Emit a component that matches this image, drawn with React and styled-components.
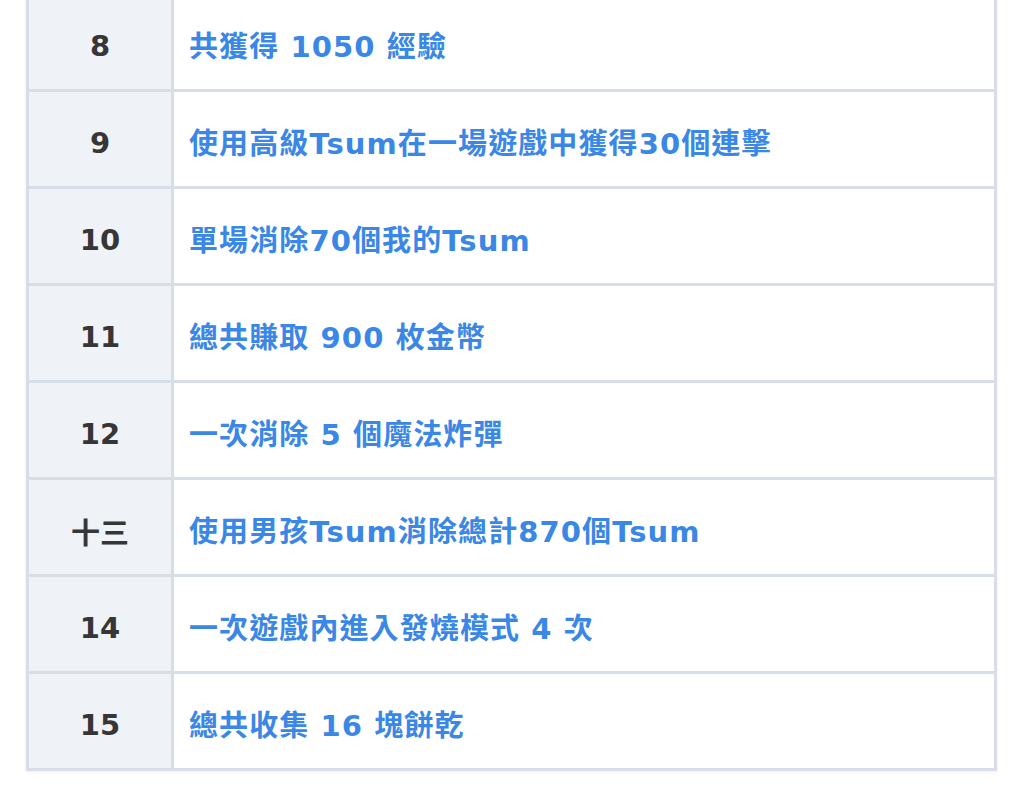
import React from "react";
import styled, { createGlobalStyle } from "styled-components";

const GlobalStyle = createGlobalStyle`
  html, body {
    margin: 0;
    padding: 0;
    background: #ffffff;
  }
  body {
    font-family: "DejaVu Sans", "Noto Sans CJK TC", sans-serif;
    overflow: hidden;
  }
`;

const Page = styled.div`
  width: 1023px;
  height: 804px;
  overflow: hidden;
  padding-left: 26px;
  box-sizing: border-box;
`;

const Table = styled.div`
  width: 971px;
  margin-top: -8px;
  border: 3px solid #d8dee8;
  border-top: none;
  box-sizing: border-box;
  box-shadow: 0 1px 3px rgba(30, 50, 80, 0.08);
`;

const Row = styled.div`
  display: flex;
  height: 97px;
  border-top: 3px solid #d8dee8;
  box-sizing: border-box;
`;

const NumCell = styled.div`
  width: 142px;
  flex-shrink: 0;
  display: flex;
  align-items: center;
  justify-content: center;
  background: #eff2f6;
  border-right: 3px solid #d8dee8;
  color: #363636;
  font-family: "DejaVu Sans", "Noto Sans CJK TC", sans-serif;
  font-weight: 700;
  font-size: 29px;
  padding-top: 7px;
`;

const TaskCell = styled.div`
  flex: 1;
  display: flex;
  align-items: center;
  padding-left: 15px;
  padding-top: 4px;
  color: #3a87e5;
  font-family: "DejaVu Sans", "Noto Sans CJK TC", sans-serif;
  font-weight: 700;
  font-size: 29px;
  letter-spacing: 1.1px;
  white-space: nowrap;
`;

const missions = [
  ["8", "共獲得 1050 經驗"],
  ["9", "使用高級Tsum在一場遊戲中獲得30個連擊"],
  ["10", "單場消除70個我的Tsum"],
  ["11", "總共賺取 900 枚金幣"],
  ["12", "一次消除 5 個魔法炸彈"],
  ["十三", "使用男孩Tsum消除總計870個Tsum"],
  ["14", "一次遊戲內進入發燒模式 4 次"],
  ["15", "總共收集 16 塊餅乾"],
];

export default function App() {
  return (
    <>
      <GlobalStyle />
      <Page>
        <Table>
          {missions.map(([num, task]) => (
            <Row key={num}>
              <NumCell>{num}</NumCell>
              <TaskCell>{task}</TaskCell>
            </Row>
          ))}
        </Table>
      </Page>
    </>
  );
}
